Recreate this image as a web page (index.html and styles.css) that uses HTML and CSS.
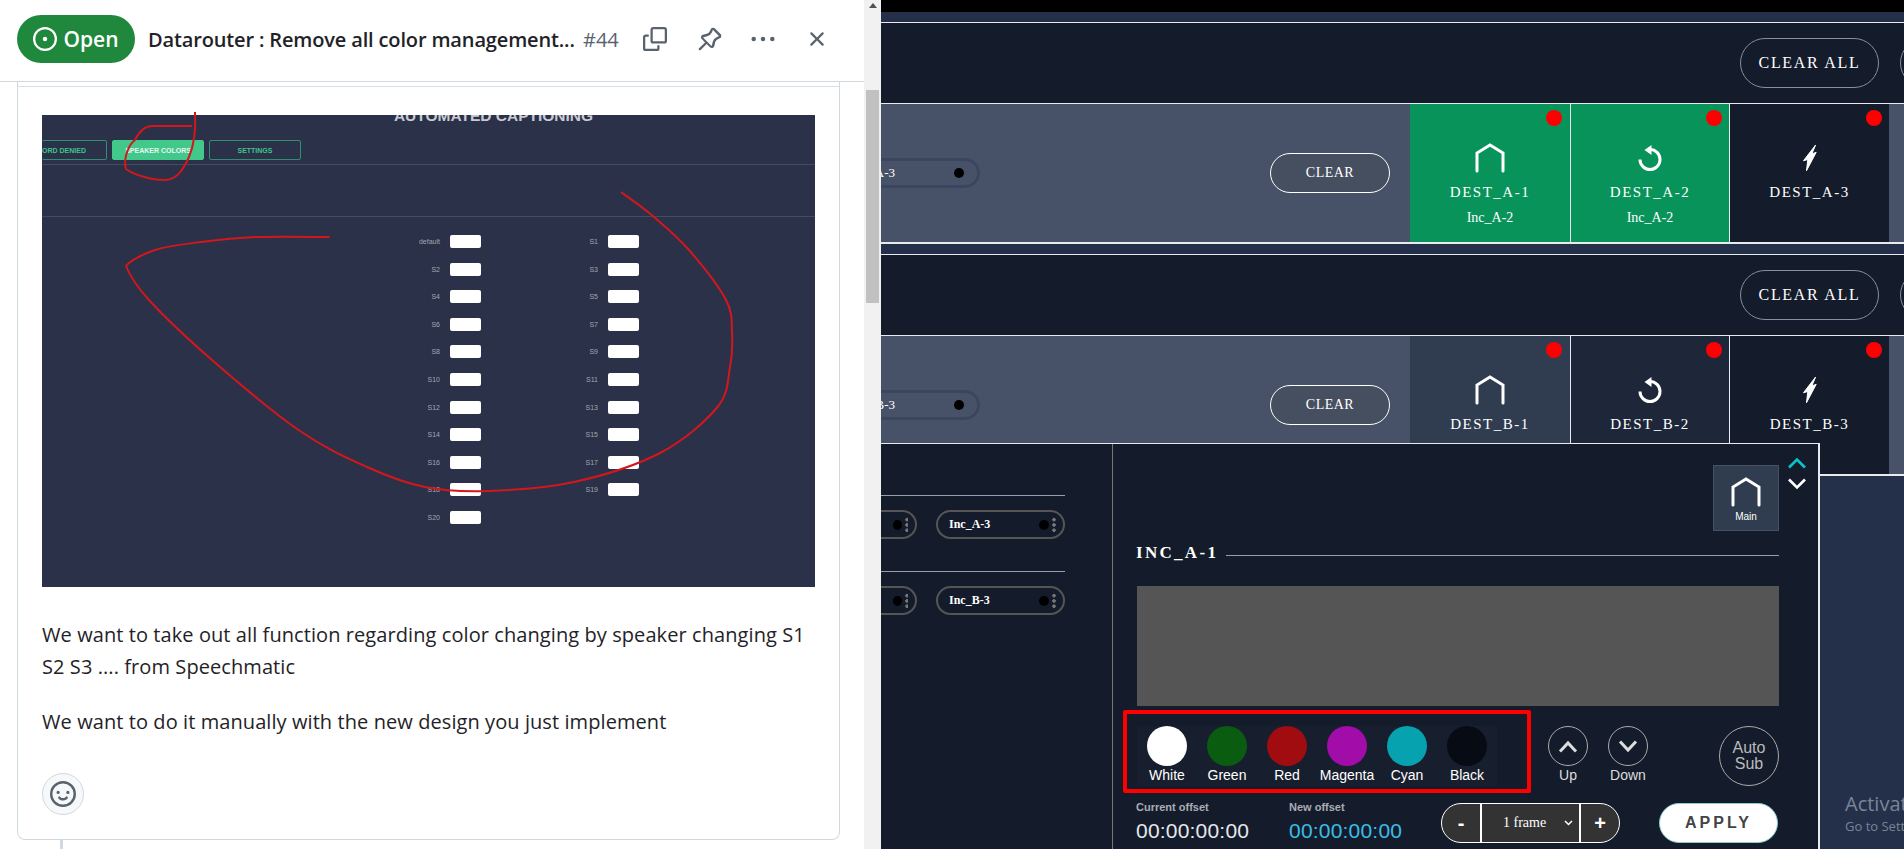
FILE: index.html
```html
<!DOCTYPE html>
<html lang="en">
<head>
    <meta charset="UTF-8">
    <title>Datarouter issue and routing panel</title>
    <link rel="stylesheet" href="styles.css">
</head>
<body>
<div class="split">
    <section class="issue">
        <header class="issue-head">
            <span class="open-pill">
                <svg width="24" height="24" viewBox="0 0 16 16" fill="currentColor"><path d="M8 9.500a1.500 1.500 0 1 0 0-3 1.500 1.500 0 0 0 0 3Z"/><path d="M8 0a8 8 0 1 1 0 16A8 8 0 0 1 8 0ZM1.500 8a6.500 6.500 0 1 0 13 0 6.500 6.500 0 0 0-13 0Z"/></svg>
                Open
            </span>
            <span class="issue-title">Datarouter : Remove all color management...</span>
            <span class="issue-num">#44</span>
            <div class="head-icons">
                <svg width="24" height="24" viewBox="0 0 16 16" fill="#59636e"><path d="M0 6.750C0 5.784.784 5 1.750 5h1.500a.75.75 0 0 1 0 1.500h-1.500a.25.25 0 0 0-.25.25v7.500c0 .138.112.25.25.25h7.500a.25.25 0 0 0 .25-.25v-1.500a.75.75 0 0 1 1.500 0v1.500A1.750 1.750 0 0 1 9.250 16h-7.500A1.750 1.750 0 0 1 0 14.250Z"/><path d="M5 1.750C5 .784 5.784 0 6.750 0h7.500C15.216 0 16 .784 16 1.750v7.500A1.750 1.750 0 0 1 14.250 11h-7.500A1.750 1.750 0 0 1 5 9.250Zm1.750-.25a.25.25 0 0 0-.25.25v7.500c0 .138.112.25.25.25h7.500a.25.25 0 0 0 .25-.25v-7.500a.25.25 0 0 0-.25-.25Z"/></svg>
                <svg width="24" height="24" viewBox="0 0 16 16" fill="#59636e" fill-rule="evenodd"><path d="m11.294.984 3.722 3.722a1.750 1.750 0 0 1-.504 2.826l-1.327.613a3.089 3.089 0 0 0-1.707 2.084l-.584 2.454c-.317 1.332-1.972 1.800-2.940.832L5.750 11.311 1.780 15.280a.749.749 0 0 1-1.275-.326.749.749 0 0 1 .215-.734L4.690 10.250 2.487 8.047c-.968-.968-.5-2.623.832-2.940l2.454-.584a3.080 3.080 0 0 0 2.084-1.707l.613-1.327a1.750 1.750 0 0 1 2.824-.505ZM9.830 2.310l-.613 1.328a4.580 4.580 0 0 1-3.095 2.537l-2.454.584a.25.25 0 0 0-.12.42l5.283 5.283a.25.25 0 0 0 .42-.12l.584-2.454a4.580 4.580 0 0 1 2.537-3.095l1.328-.613a.25.25 0 0 0 .072-.404l-3.722-3.722a.25.25 0 0 0-.404.072Z"/></svg>
                <svg class="dots" width="24" height="24" viewBox="0 0 16 16" fill="#59636e"><circle cx="1.800" cy="8" r="1.500"/><circle cx="8" cy="8" r="1.500"/><circle cx="14.200" cy="8" r="1.500"/></svg>
                <svg class="close" width="24" height="24" viewBox="0 0 16 16" fill="#59636e"><path d="M3.720 3.720a.75.75 0 0 1 1.060 0L8 6.940l3.220-3.220a.749.749 0 1 1 1.060 1.060L9.060 8l3.220 3.220a.749.749 0 1 1-1.060 1.060L8 9.060l-3.220 3.220a.749.749 0 1 1-1.060-1.060L6.940 8 3.720 4.780a.75.75 0 0 1 0-1.060Z"/></svg>
            </div>
        </header>
        <div class="issue-body">
            <article class="comment">
                <div class="comment-rule"></div>
                <div class="shot">
                    <div class="shot-title">AUTOMATED CAPTIONING</div>
                    <div class="shot-tabs">
                        <span class="shot-tab first">ORD DENIED</span>
                        <span class="shot-tab active">SPEAKER COLORS</span>
                        <span class="shot-tab">SETTINGS</span>
                    </div>
                    <div class="shot-band"></div>
                    <div class="speakers">
                        <label>default<i></i></label><label>S1<i></i></label>
                        <label>S2<i></i></label><label>S3<i></i></label>
                        <label>S4<i></i></label><label>S5<i></i></label>
                        <label>S6<i></i></label><label>S7<i></i></label>
                        <label>S8<i></i></label><label>S9<i></i></label>
                        <label>S10<i></i></label><label>S11<i></i></label>
                        <label>S12<i></i></label><label>S13<i></i></label>
                        <label>S14<i></i></label><label>S15<i></i></label>
                        <label>S16<i></i></label><label>S17<i></i></label>
                        <label>S18<i></i></label><label>S19<i></i></label>
                        <label>S20<i></i></label>
                    </div>
                    <!-- hand drawn marks, coordinates are relative to the shot -->
                    <svg class="scribble" width="773" height="472" viewBox="0 0 773 472" fill="none" stroke="#d3171c" stroke-width="2">
                        <path d="M153 -3C154 15 153 28 147 42C141 55 135 65 122 65C110 65 92 60 84 54C81 45 86 30 93 25C98 15 103 11 110 11C125 11 140 11 150 11"/>
                        <path d="M287.500 122C275.600 122 237.400 121.200 216 122C194.600 122.800 176.200 124.800 159 127C141.800 129.200 125.500 131 113 135C100.500 139 88 146 84 151C86 156 92.700 169.300 107 185C121.300 200.700 145.100 223.300 170 245C194.900 266.700 230.700 297.200 256.500 315C282.300 332.800 303.900 342.500 325 352C346.100 361.500 362.800 368 383 372C403.200 376 421.200 376.800 446 376C470.800 375.200 503.300 373.300 532 367C560.700 360.700 594.100 350.500 618 338C641.900 325.500 663.800 306.300 675.500 292C687.200 277.700 685.600 264.300 688 252C690.400 239.700 690.700 229.200 690 218C689.300 206.800 691.200 198.800 684 185C676.800 171.200 659 148.800 647 135C635 121.200 623.300 111.700 612 102C600.700 92.300 584.500 81.200 579 77"/>
                    </svg>
                </div>
                <p class="comment-text">We want to take out all function regarding color changing by speaker changing S1 S2 S3 .... from Speechmatic</p>
                <p class="comment-text">We want to do it manually with the new design you just implement</p>
                <button class="react">
                    <svg width="26" height="26" viewBox="0 0 16 16" fill="#59636e"><path d="M8 0a8 8 0 1 1 0 16A8 8 0 0 1 8 0ZM1.500 8a6.500 6.500 0 1 0 13 0 6.500 6.500 0 0 0-13 0Zm3.820 1.636a.75.75 0 0 1 1.038.175l.007.009c.103.118.22.222.35.31.264.178.683.37 1.285.37.602 0 1.020-.192 1.285-.371.13-.088.247-.192.35-.31l.007-.008a.75.75 0 0 1 1.222.87l-.022-.015c.02.013.021.015.021.015v.001l-.001.002-.002.003-.005.007-.014.019a2.066 2.066 0 0 1-.184.213c-.16.166-.338.316-.53.445-.63.418-1.370.638-2.127.629-.946 0-1.652-.308-2.126-.63a3.331 3.331 0 0 1-.715-.657l-.014-.02-.005-.006-.002-.003v-.002h-.001l.613-.432-.614.43a.75.75 0 0 1 .183-1.044ZM12 7a1 1 0 1 1-2 0 1 1 0 0 1 2 0ZM5 8a1 1 0 1 1 0-2 1 1 0 0 1 0 2Zm5.250-2.250.75.75Z"/></svg>
                </button>
            </article>
            <div class="timeline"></div>
        </div>
    </section>

    <div class="scrollbar"><div class="scroll-up"></div><div class="scroll-thumb"></div></div>

    <section class="router">
        <div class="top-black"></div>

        <div class="group">
            <div class="group-head">
                <button class="clear-all">CLEAR ALL</button>
                <button class="clear-all next"></button>
            </div>
            <div class="group-row">
                <div class="src-pill"><span>A-3</span><b></b></div>
                <button class="clear">CLEAR</button>
                <div class="dest on">
                    <em></em>
                    <svg class="ico" width="30" height="30" viewBox="0 0 30 30" fill="none" stroke="#fff" stroke-width="3" stroke-linecap="round"><path d="M2 28V10L15 2 28 10V28"/></svg>
                    <strong>DEST_A-1</strong>
                    <small>Inc_A-2</small>
                </div>
                <div class="dest on">
                    <em></em>
                    <svg class="ico" width="30" height="30" viewBox="0 0 30 30" fill="none" stroke="#fff" stroke-width="3"><path d="M15 6.500A10 10 0 1 1 5 16.500"/><path d="M16.500 2 9.500 7 16.500 12Z" fill="#fff" stroke="none"/></svg>
                    <strong>DEST_A-2</strong>
                    <small>Inc_A-2</small>
                </div>
                <div class="dest">
                    <em></em>
                    <svg class="ico" width="30" height="30" viewBox="0 0 30 30" fill="#fff" stroke="#fff" stroke-linejoin="round"><path d="M20.600 2 8.500 17.700 12.800 16.500 11.500 27.700 21.200 9.300 16.800 11Z"/></svg>
                    <strong>DEST_A-3</strong>
                </div>
            </div>
        </div>

        <div class="group">
            <div class="group-head">
                <button class="clear-all">CLEAR ALL</button>
                <button class="clear-all next"></button>
            </div>
            <div class="group-row">
                <div class="src-pill"><span>B-3</span><b></b></div>
                <button class="clear">CLEAR</button>
                <div class="dest mid">
                    <em></em>
                    <svg class="ico" width="30" height="30" viewBox="0 0 30 30" fill="none" stroke="#fff" stroke-width="3" stroke-linecap="round"><path d="M2 28V10L15 2 28 10V28"/></svg>
                    <strong>DEST_B-1</strong>
                </div>
                <div class="dest low">
                    <em></em>
                    <svg class="ico" width="30" height="30" viewBox="0 0 30 30" fill="none" stroke="#fff" stroke-width="3"><path d="M15 6.500A10 10 0 1 1 5 16.500"/><path d="M16.500 2 9.500 7 16.500 12Z" fill="#fff" stroke="none"/></svg>
                    <strong>DEST_B-2</strong>
                </div>
                <div class="dest">
                    <em></em>
                    <svg class="ico" width="30" height="30" viewBox="0 0 30 30" fill="#fff" stroke="#fff" stroke-linejoin="round"><path d="M20.600 2 8.500 17.700 12.800 16.500 11.500 27.700 21.200 9.300 16.800 11Z"/></svg>
                    <strong>DEST_B-3</strong>
                </div>
            </div>
        </div>

        <div class="activate">
            <div class="activate-big">Activate Windows</div>
            <div class="activate-small">Go to Settings to activate Windows.</div>
        </div>

        <!-- popup lying over the lower rows -->
        <div class="popup">
            <div class="inc-list">
                <div class="inc-group">
                    <div class="inc-row">
                        <div class="inc-pill cut"><b></b><u></u></div>
                        <div class="inc-pill"><span>Inc_A-3</span><b></b><u></u></div>
                    </div>
                </div>
                <div class="inc-group">
                    <div class="inc-row">
                        <div class="inc-pill cut"><b></b><u></u></div>
                        <div class="inc-pill"><span>Inc_B-3</span><b></b><u></u></div>
                    </div>
                </div>
            </div>
            <div class="editor">
                <div class="editor-top">
                    <div class="main-box">
                        <svg width="30" height="30" viewBox="0 0 30 30" fill="none" stroke="#fff" stroke-width="3" stroke-linecap="round"><path d="M2 28V10L15 2 28 10V28"/></svg>
                        <span>Main</span>
                    </div>
                    <div class="arrows">
                        <svg width="18" height="12" viewBox="0 0 18 12" fill="none" stroke="#06c6cc" stroke-width="2.600"><path d="M1 10.500 9 2.500 17 10.500"/></svg>
                        <svg width="18" height="12" viewBox="0 0 18 12" fill="none" stroke="#fff" stroke-width="2.600"><path d="M1 1.500 9 9.500 17 1.500"/></svg>
                    </div>
                </div>
                <h4 class="inc-name"><span>INC_A-1</span></h4>
                <div class="preview"></div>
                <div class="controls">
                    <div class="swatches">
                        <div class="swatch"><i class="c-white"></i>White</div>
                        <div class="swatch"><i class="c-green"></i>Green</div>
                        <div class="swatch"><i class="c-red"></i>Red</div>
                        <div class="swatch"><i class="c-magenta"></i>Magenta</div>
                        <div class="swatch"><i class="c-cyan"></i>Cyan</div>
                        <div class="swatch"><i class="c-black"></i>Black</div>
                    </div>
                    <div class="swatch move">
                        <i><svg width="20" height="13" viewBox="0 0 20 13" fill="none" stroke="#ddd" stroke-width="3"><path d="M2 11.500 10 3 18 11.500"/></svg></i>Up
                    </div>
                    <div class="swatch move">
                        <i><svg width="20" height="13" viewBox="0 0 20 13" fill="none" stroke="#ddd" stroke-width="3"><path d="M2 1.500 10 10 18 1.500"/></svg></i>Down
                    </div>
                    <div class="auto-sub">Auto<br>Sub</div>
                </div>
                <div class="offsets">
                    <div class="offset">
                        <label>Current offset</label>
                        <div class="time">00:00:00:00</div>
                    </div>
                    <div class="offset new">
                        <label>New offset</label>
                        <div class="time">00:00:00:00</div>
                    </div>
                    <div class="stepper">
                        <span class="step">-</span>
                        <span class="frame">1 frame
                            <svg width="9" height="6" viewBox="0 0 9 6" fill="none" stroke="#fff" stroke-width="1.500"><path d="M1 1 4.500 4.500 8 1"/></svg>
                        </span>
                        <span class="step">+</span>
                    </div>
                    <button class="apply">APPLY</button>
                </div>
            </div>
        </div>
    </section>
</div>
</body>
</html>
```

FILE: styles.css
```css
* {
    box-sizing: border-box;
}

html, body {
    margin: 0;
    height: 100%;
    overflow: hidden;
}

.split {
    display: flex;
    height: 849px;
}

/* left side, the issue */
.issue {
    width: 864px;
    background: #fff;
    display: flex;
    flex-direction: column;
    font-family: "Open Sans", "Noto Sans", sans-serif;
    color: #1f2328;
}

.issue-head {
    height: 82px;
    flex: none;
    display: flex;
    align-items: center;
    padding: 0 0 3px 17px;
    border-bottom: 1px solid #d1d9e0;
}

.open-pill {
    width: 118px;
    height: 48px;
    border-radius: 24px;
    background: #1f883d;
    color: #fff;
    display: flex;
    align-items: center;
    justify-content: center;
    gap: 6px;
    font-size: 21px;
    font-weight: 600;
}

.issue-title {
    margin-left: 13px;
    width: 426px;
    font-size: 20px;
    font-weight: 600;
    white-space: nowrap;
    letter-spacing: -0.15px;
}

.issue-num {
    margin-left: 9px;
    font-size: 20px;
    color: #59636e;
}

.head-icons {
    margin-left: 24px;
    display: flex;
    gap: 31px;
}

.head-icons .dots {
    margin-left: -2px;
}

.head-icons .close {
    margin-left: -1px;
}

.issue-body {
    flex: 1;
    padding: 0 24px 0 17px;
    overflow: hidden;
}

.comment {
    height: 758px;
    border: 1px solid #d1d9e0;
    border-top: 0;
    border-radius: 0 0 8px 8px;
    padding: 0 24px;
}

.comment-rule {
    height: 5px;
    margin: 0 -24px 28px;
    border-bottom: 1px solid #d8dee4;
}

.timeline {
    width: 3px;
    height: 20px;
    margin-left: 43px;
    background: #d1d9e0;
}

.comment-text {
    margin: 0 0 23px;
    font-size: 20px;
    line-height: 32px;
    letter-spacing: 0.08px;
}

.react {
    width: 42px;
    height: 42px;
    margin-top: 35px;
    padding: 0;
    border-radius: 50%;
    border: 1px solid #d1d9e0;
    background: #f6f8fa;
    display: flex;
    align-items: center;
    justify-content: center;
}

/* the screenshot pasted into the comment */
.shot {
    position: relative;
    width: 773px;
    height: 472px;
    margin-bottom: 32px;
    background: #2a3149;
    font-family: "Liberation Sans", Arial, sans-serif;
}

.shot-title {
    height: 25px;
    overflow: hidden;
    text-align: center;
    margin-left: 130px;
    font-size: 15.500px;
    font-weight: 700;
    line-height: 2px;
    color: #c9cbd2;
}

.shot-tabs {
    display: flex;
    gap: 5px;
    height: 25px;
    border-bottom: 1px solid #444d60;
    padding-bottom: 4px;
}

.shot-tab {
    width: 92px;
    border: 1px solid #2f8f74;
    border-radius: 2px;
    color: #3fc58a;
    font-size: 7px;
    font-weight: 700;
    text-align: center;
    line-height: 19px;
}

.shot-tab.first {
    width: 65px;
    border-left: 0;
    text-align: left;
}

.shot-tab.active {
    background: #43c88c;
    border-color: #43c88c;
    color: #e8f7f0;
}

.shot-band {
    height: 52px;
    border-bottom: 1px solid #444d60;
}

.speakers {
    display: grid;
    grid-template-columns: 158px 158px;
    grid-auto-rows: 27.6px;
    padding: 18px 0 0 282px;
}

.speakers label {
    display: flex;
    align-items: center;
    justify-content: flex-end;
    gap: 10px;
    width: 157px;
    font-size: 7px;
    color: #a3a7b3;
    height: 13px;
}

.speakers i {
    width: 31px;
    height: 13px;
    background: #fff;
    border-radius: 2px;
}

.scribble {
    position: absolute;
    left: 0;
    top: 0;
    overflow: visible;
}

.scrollbar {
    width: 17px;
    background: #f1f1f1;
    padding: 0 2px;
}

.scroll-up {
    width: 0;
    height: 0;
    margin: 3px auto 82px;
    border-left: 4px solid transparent;
    border-right: 4px solid transparent;
    border-bottom: 5px solid #505050;
}

.scroll-thumb {
    height: 213px;
    background: #c1c1c1;
}

/* right side, the router */
.router {
    position: relative;
    flex: 1;
    overflow: hidden;
    background: #24304a;
    font-family: "Liberation Serif", "Times New Roman", serif;
    color: #fff;
}

.top-black {
    height: 12px;
    background: #000;
}

.group {
    padding-top: 10px;
}

.group-head {
    height: 82px;
    background: #141c2b;
    border-top: 1px solid #e8eaf0;
    border-bottom: 1px solid #e8eaf0;
    display: flex;
    align-items: center;
    justify-content: flex-end;
    gap: 21px;
    overflow: hidden;
}

.clear-all {
    flex: none;
    width: 139px;
    height: 50px;
    border: 1px solid #8a8f98;
    border-radius: 25px;
    background: transparent;
    color: #fff;
    font-family: inherit;
    font-size: 16px;
    letter-spacing: 1.700px;
}

.clear-all.next {
    margin-right: -135px;
}

.group-row {
    height: 140px;
    display: flex;
    align-items: center;
    background: #475268;
    border-bottom: 2px solid #e8eaf0;
    padding-right: 15px;
}

.src-pill {
    width: 160px;
    height: 30px;
    margin-left: -61px;
    border: 3px solid #3a4660;
    border-radius: 15px;
    display: flex;
    align-items: center;
    justify-content: flex-end;
    padding-right: 13px;
    font-size: 13px;
}

.src-pill span {
    margin-right: 59px;
}

.src-pill b, .inc-pill b {
    width: 10px;
    height: 10px;
    background: #000;
    border-radius: 50%;
}

.clear {
    width: 120px;
    height: 40px;
    margin: 0 20px 0 290px;
    border: 1px solid #fff;
    border-radius: 20px;
    background: #464f60;
    color: #fff;
    font-family: inherit;
    font-size: 14px;
    letter-spacing: .5px;
}

.dest {
    position: relative;
    width: 159px;
    height: 100%;
    flex: none;
    background: #141c2b;
    display: flex;
    flex-direction: column;
    align-items: center;
    padding-top: 39px;
    border-right: 1px solid #e8eaf0;
}

.dest:nth-child(3) {
    width: 161px;
}

.dest:last-child {
    border-right: 0;
}

.dest.on {
    background: #08935b;
}

.dest.mid {
    background: #303c50;
}

.dest.low {
    background: #1d2739;
}

.dest em {
    position: absolute;
    top: 6px;
    right: 7px;
    width: 16px;
    height: 16px;
    border-radius: 50%;
    background: #f00;
}

.dest:nth-child(3) em {
    right: 8px;
}

.dest strong {
    margin-top: 9px;
    font-size: 15px;
    font-weight: 400;
    letter-spacing: 1.500px;
    line-height: 20px;
}

.dest small {
    margin-top: 7px;
    font-size: 14px;
    line-height: 18px;
}

.activate {
    position: absolute;
    left: 964px;
    top: 790px;
    white-space: nowrap;
    font-family: "Open Sans", sans-serif;
    color: #7b8497;
}

.activate-big {
    font-size: 20px;
    line-height: 27px;
}

.activate-small {
    font-size: 13px;
    line-height: 18px;
}

.popup {
    position: absolute;
    left: 0;
    top: 443px;
    width: 939px;
    height: 406px;
    background: #141c2b;
    border-top: 1px solid #e8eaf0;
    border-right: 2px solid #e8eaf0;
    display: flex;
}

.inc-list {
    width: 232px;
    border-right: 1px solid #777;
    padding-top: 51px;
    flex: none;
    overflow: hidden;
}

.inc-group {
    width: 184px;
    height: 76px;
    border-top: 1px solid #9a9ea6;
    padding-top: 14px;
}

.inc-row {
    display: flex;
    justify-content: flex-end;
    gap: 19px;
}

.inc-pill {
    flex: none;
    width: 129px;
    height: 29px;
    border: 2px solid #555;
    border-radius: 15px;
    display: flex;
    align-items: center;
    padding: 0 7px 0 11px;
    font-size: 12px;
    font-weight: 700;
}

.inc-pill.cut {
    width: 36px;
    margin-right: 0;
    border-left: 0;
    border-radius: 0 15px 15px 0;
    padding-left: 12px;
}

.inc-pill span {
    flex: 1;
}

.inc-pill u {
    width: 4px;
    height: 16px;
    margin-left: 3px;
    background: radial-gradient(circle, #777 1.500px, transparent 2px) 0 0 / 4px 5.300px;
}

.editor {
    flex: 1;
    padding: 14px 0 0 24px;
}

.editor-top {
    display: flex;
    justify-content: flex-end;
    gap: 9px;
    padding-right: 12px;
}

.main-box {
    width: 66px;
    height: 66px;
    margin-top: 7px;
    background: #303c50;
    border: 1px solid #465166;
    display: flex;
    flex-direction: column;
    align-items: center;
    padding-top: 11px;
}

.main-box span {
    margin-top: 4px;
    font-family: "Liberation Sans", Arial, sans-serif;
    font-size: 10px;
}

.arrows {
    display: flex;
    flex-direction: column;
    gap: 9px;
    margin-top: -1px;
}

.inc-name {
    display: flex;
    align-items: center;
    gap: 8px;
    width: 642px;
    height: 20px;
    margin: 14px 0 21px;
    font-size: 17px;
    letter-spacing: 2.300px;
    line-height: 20px;
}

.inc-name span {
    margin: -5px 0 0 -1px;
}

.inc-name::after {
    content: "";
    flex: 1;
    height: 1px;
    background: #9a9ea6;
}

.preview {
    width: 642px;
    height: 120px;
    background: #555;
}

.controls {
    display: flex;
    align-items: flex-start;
    margin: 4px 0 0 -14px;
}

.swatches {
    width: 408px;
    height: 83px;
    display: flex;
    padding: 12px 0 0 10px;
    border: 4px solid #f00;
    border-radius: 2px;
    margin-right: 7px;
}

.swatch {
    width: 60px;
    height: 60px;
    display: flex;
    flex-direction: column;
    align-items: center;
    font-family: "Liberation Sans", Arial, sans-serif;
    font-size: 14px;
    line-height: 19px;
    background: #171e2d;
}

.swatch i {
    flex: none;
    width: 40px;
    height: 40px;
    border-radius: 50%;
}

.c-white { background: #fff; }
.c-green { background: #0a5c10; }
.c-red { background: #a00c10; }
.c-magenta { background: #a20ca8; }
.c-cyan { background: #06a2b0; }
.c-black { background: #070b14; }

.move {
    margin-top: 16px;
    color: #ddd;
    background: transparent;
}

.move i {
    border: 1px solid #aaa;
    display: flex;
    align-items: center;
    justify-content: center;
}

.auto-sub {
    width: 60px;
    height: 60px;
    margin: 16px 0 0 61px;
    border: 1px solid #aaa;
    border-radius: 50%;
    display: flex;
    align-items: center;
    justify-content: center;
    text-align: center;
    font-family: "Liberation Sans", Arial, sans-serif;
    font-size: 16px;
    line-height: 16px;
    color: #bbb;
}

.offsets {
    display: flex;
    margin: 10px 0 0 -1px;
    align-items: flex-start;
}

.offset {
    width: 153px;
    margin-top: -4px;
    font-family: "Liberation Sans", Arial, sans-serif;
}

.offset label {
    display: block;
    font-size: 11px;
    font-weight: 700;
    color: #a9adb5;
    line-height: 16px;
    margin-bottom: 2px;
}

.time {
    font-size: 21px;
    line-height: 28px;
    letter-spacing: .2px;
    color: #e6e8ec;
}

.offset.new {
    width: 152px;
}

.new .time {
    color: #3bbde6;
}

.stepper {
    width: 179px;
    height: 40px;
    display: flex;
    border: 1px solid #fff;
    border-radius: 20px;
    background: #333;
    overflow: hidden;
}

.step {
    width: 38px;
    display: flex;
    align-items: center;
    justify-content: center;
    font-family: "Liberation Sans", Arial, sans-serif;
    font-size: 20px;
    font-weight: 700;
}

.frame {
    flex: 1;
    border-left: 2px solid #fff;
    border-right: 2px solid #fff;
    display: flex;
    align-items: center;
    justify-content: space-between;
    padding: 0 6px 0 21px;
    font-size: 14px;
}

.apply {
    width: 119px;
    height: 40px;
    margin-left: 39px;
    border: 1px solid #8cc;
    border-radius: 20px;
    background: #fff;
    color: #444;
    font-family: "Liberation Sans", Arial, sans-serif;
    font-size: 16px;
    font-weight: 700;
    letter-spacing: 3px;
}
```
